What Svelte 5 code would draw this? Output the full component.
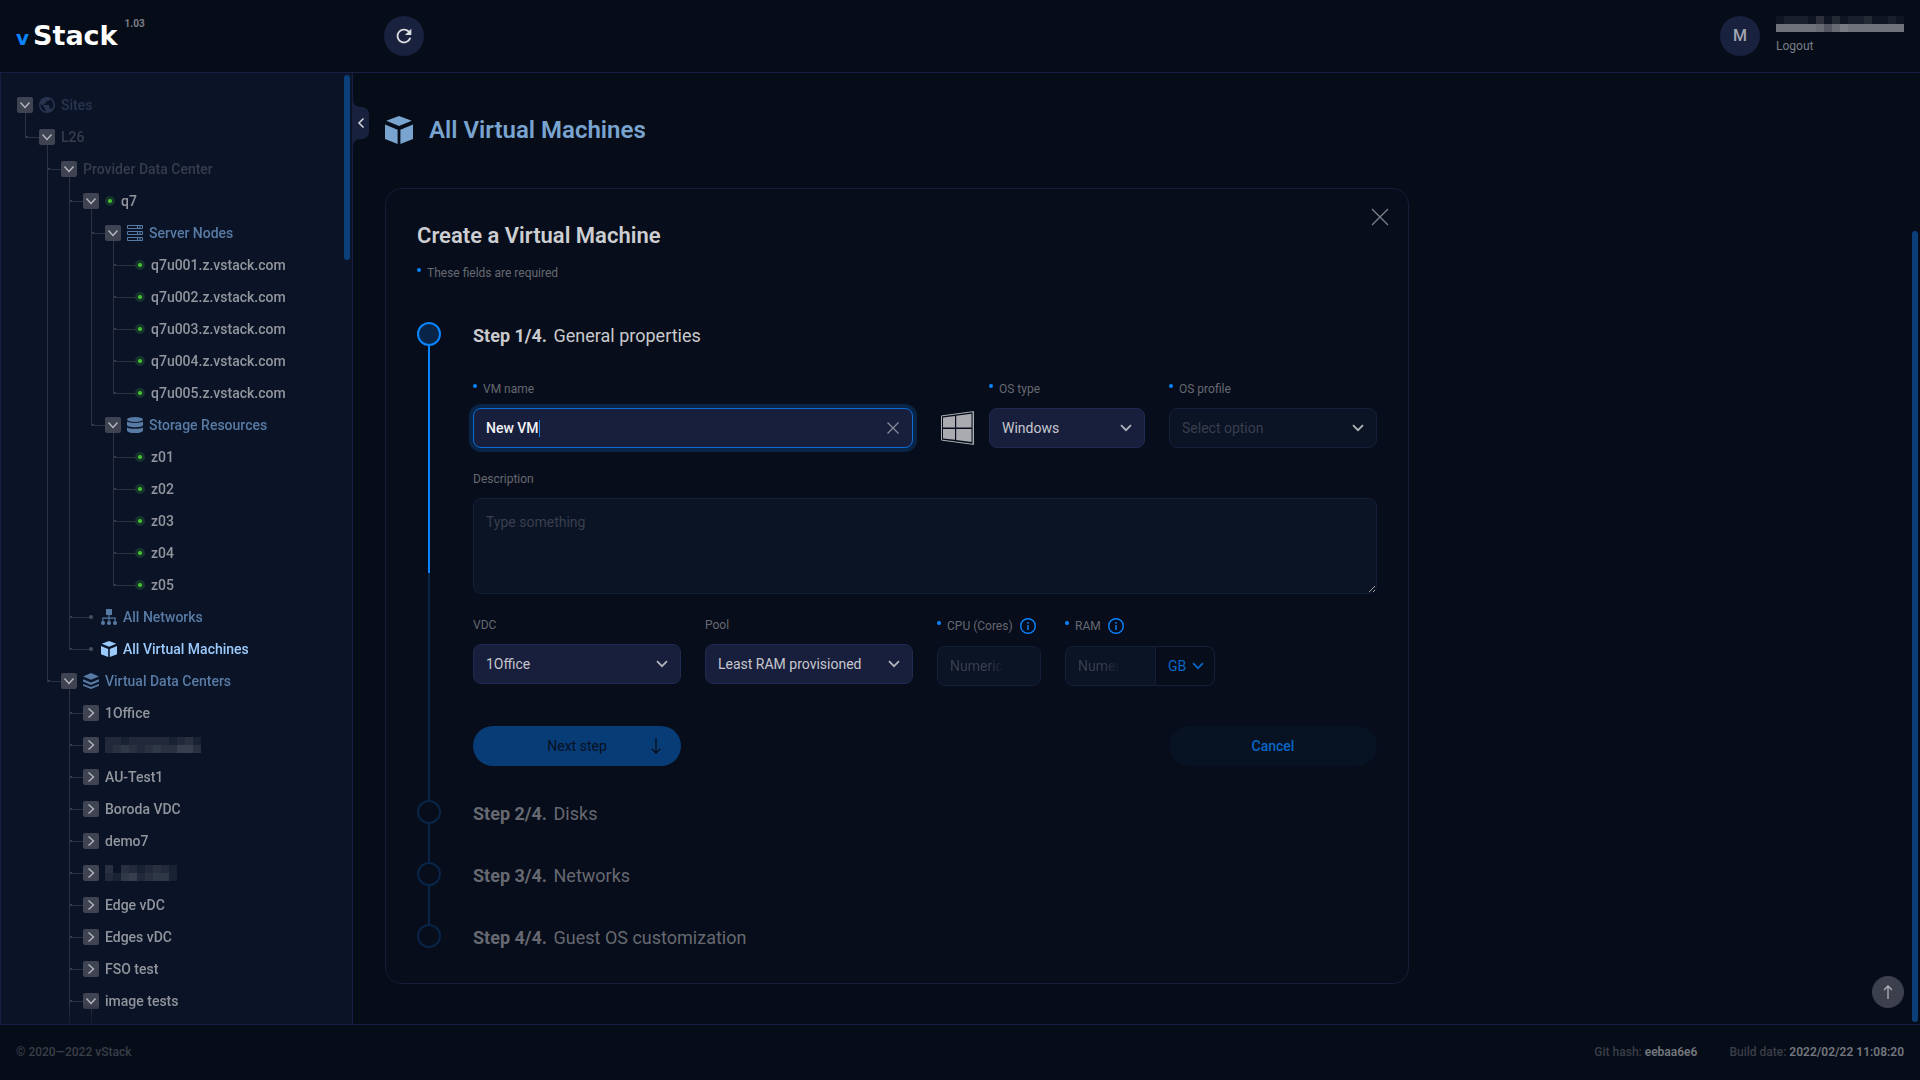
<script>
  const host = (n) => ({ label: n, kind: 'host' });

  const tree = [
    {
      label: 'Sites', icon: 'globe', tone: 'site', open: true,
      children: [{
        label: 'L26', tone: 'dim', open: true,
        children: [
          {
            label: 'Provider Data Center', tone: 'dim', open: true,
            children: [
              {
                label: 'q7', status: true, open: true,
                children: [
                  {
                    label: 'Server Nodes', icon: 'servers', tone: 'link', open: true,
                    children: [1, 2, 3, 4, 5].map((i) => host(`q7u00${i}.z.vstack.com`))
                  },
                  {
                    label: 'Storage Resources', icon: 'disks', tone: 'link', open: true,
                    children: [1, 2, 3, 4, 5].map((i) => host(`z0${i}`))
                  }
                ]
              },
              { label: 'All Networks', icon: 'network', tone: 'link', kind: 'leaf' },
              { label: 'All Virtual Machines', icon: 'cube', tone: 'active', kind: 'leaf' }
            ]
          },
          {
            label: 'Virtual Data Centers', icon: 'layers', tone: 'link', open: true,
            children: [
              { label: '1Office' },
              { mask: ['332333332342', '345434544664'] },
              { label: 'AU-Test1' },
              { label: 'Boroda VDC' },
              { label: 'demo7' },
              { mask: ['404323432', '325634552'] },
              { label: 'Edge vDC' },
              { label: 'Edges vDC' },
              { label: 'FSO test' },
              { label: 'image tests', open: true, children: [{ kind: 'pending' }] },
              { kind: 'pending' }
            ]
          }
        ]
      }]
    }
  ];

  const userMask = ['1222141312231121', 'bbbbba8acbbbbbbb'];
  const laterSteps = ['Disks', 'Networks', 'Guest OS customization'];

  let name = $state('New VM');
  const alpha = (c) => parseInt(c, 16) / 25;
</script>

{#snippet icon(id)}
  <svg class="icon" viewBox="0 0 16 16" aria-hidden="true">
    {#if id === 'globe'}
      <path transform="scale(.8) translate(-2 -2)" d="M12 2C6.48 2 2 6.48 2 12s4.48 10 10 10 10-4.48 10-10S17.52 2 12 2zm-1 17.93c-3.95-.49-7-3.85-7-7.93 0-.62.08-1.21.21-1.79L9 15v1c0 1.1.9 2 2 2v1.93zm6.9-2.54c-.26-.81-1-1.39-1.9-1.39h-1v-3c0-.55-.45-1-1-1H8v-2h2c.55 0 1-.45 1-1V7h2c1.1 0 2-.9 2-2v-.41c2.93 1.19 5 4.06 5 7.41 0 2.08-.8 3.97-2.1 5.39z" />
    {:else if id === 'servers'}
      {#each [0, 6, 12] as y}
        <path fill-rule="evenodd" d="M1 {y}h14a1 1 0 0 1 1 1v2a1 1 0 0 1-1 1H1a1 1 0 0 1-1-1v-2a1 1 0 0 1 1-1zM1 {y + 1}v2h9v-2zM11 {y + 1}v2h1.5v-2zM13.5 {y + 1}v2H15v-2z" />
      {/each}
    {:else if id === 'disks'}
      <ellipse cx="8" cy="2.5" rx="8" ry="2.5" />
      <path d="M0 4.6C2 6.5 14 6.5 16 4.6V8c0 3-16 3-16 0zM0 10.4c2 1.9 14 1.9 16 0v3c0 3.4-16 3.4-16 0z" />
    {:else if id === 'network'}
      <path d="M5 0h6v6H8.6v2.6h6.1v4h-1.1V9.7H8.6v2.9H7.4V9.7h-5v2.9H1.3v-4h6.1V6H5z" />
      <circle cx="2" cy="14" r="2" /><circle cx="8" cy="14" r="2" /><circle cx="14" cy="14" r="2" />
    {:else if id === 'layers'}
      <path d="M8 0l8 3.400L8 6.800 0 3.400zM0 6.300l8 3.200 8-3.200v2.300L8 12 0 8.600zM0 11l8 3.100L16 11v1.700L8 16l-8-3.300z" />
    {:else if id === 'cube'}
      <path d="M8 0l7.300 2.700L8 5.700.7 2.700zM0 4.900l7.200 3V16L0 13.200zM16 4.900l-7.200 3V16l7.200-2.800z" />
    {/if}
  </svg>
{/snippet}

{#snippet chevron()}
  <svg class="chevron" viewBox="0 0 12 8" aria-hidden="true"><path d="M1 1.200l5 5 5-5" /></svg>
{/snippet}

{#snippet pixels(rows)}
  <span class="pixels" aria-label="Hidden name" role="img">
    {#each rows as row}
      <span class="pixel-row">
        {#each row as c}<i style:opacity={alpha(c)}></i>{/each}
      </span>
    {/each}
  </span>
{/snippet}

{#snippet branch(nodes)}
  {#each nodes as n}
    <li class={n.kind ?? 'group'}>
      {#if n.kind !== 'pending'}
        <div class="row {n.tone ?? 'plain'}">
          {#if n.kind === 'leaf'}
            <span class="knot"></span>
          {:else if !n.kind}
            <button class="toggle" class:open={n.open} aria-label="Toggle {n.label ?? 'item'}" aria-expanded={!!n.open}>
              <svg viewBox="0 0 16 16" aria-hidden="true"><path d="M5.500 3.500L10.500 8l-5 4.500" /></svg>
            </button>
          {/if}
          {#if n.status || n.kind === 'host'}<span class="status"></span>{/if}
          {#if n.icon}{@render icon(n.icon)}{/if}
          {#if n.mask}{@render pixels(n.mask)}{:else}<a href="#{n.label}">{n.label}</a>{/if}
        </div>
      {/if}
      {#if n.children}
        <ul>{@render branch(n.children)}</ul>
      {/if}
    </li>
  {/each}
{/snippet}

<div class="app">
  <header>
    <div class="brand">
      <a class="logo" href="#home"><span class="v">v</span>Stack</a>
      <span class="version">1.03</span>
    </div>
    <button class="refresh" aria-label="Refresh">
      <svg viewBox="0 0 24 24" aria-hidden="true"><path d="M17.650 6.350C16.200 4.900 14.210 4 12 4c-4.420 0-7.990 3.580-7.990 8s3.570 8 7.990 8c3.730 0 6.840-2.550 7.730-6h-2.080c-.82 2.330-3.040 4-5.650 4-3.310 0-6-2.690-6-6s2.690-6 6-6c1.660 0 3.140.69 4.220 1.780L13 11h7V4l-2.350 2.350z" /></svg>
    </button>
    <div class="user">
      <span class="avatar">M</span>
      <div class="account">
        {@render pixels(userMask)}
        <a href="#logout">Logout</a>
      </div>
    </div>
  </header>

  <div class="body">
    <aside>
      <nav aria-label="Sites"><ul class="root">{@render branch(tree)}</ul></nav>
      <span class="thumb side"></span>
      <button class="collapse" aria-label="Collapse sidebar">
        <svg viewBox="0 0 16 48" aria-hidden="true">
          <path class="tab" d="M0 0C0 5 3 8 8 8h1a7 7 0 0 1 7 7v18a7 7 0 0 1-7 7H8c-5 0-8 3-8 8z" />
          <path class="arrow" d="M10.500 19.500L6 24l4.500 4.500" />
        </svg>
      </button>
    </aside>

    <main>
      <h1>{@render icon('cube')}All Virtual Machines</h1>

      <section class="card">
        <div class="card-head">
          <h2>Create a Virtual Machine</h2>
          <button class="close" aria-label="Close">
            <svg viewBox="0 0 18 18" aria-hidden="true"><path d="M1 1l16 16M17 1L1 17" /></svg>
          </button>
        </div>
        <p class="note"><i class="req"></i>These fields are required</p>

        <ol class="steps">
          <li class="step current">
            <div class="rail"><span class="bullet"></span><span class="line"></span></div>
            <div class="step-body">
              <h3><b>Step 1/4.</b> General properties</h3>
              <form>
                <div class="fields">
                  <div class="field wide">
                    <label for="vm-name"><i class="req"></i>VM name</label>
                    <div class="control">
                      <input id="vm-name" class="focused" type="text" bind:value={name} />
                      <button type="button" class="clear" aria-label="Clear name">
                        <svg viewBox="0 0 12 12" aria-hidden="true"><path d="M.5.500l11 11M11.500.500l-11 11" /></svg>
                      </button>
                    </div>
                  </div>
                  <div class="os">
                    <svg class="windows" viewBox="0 0 33 34" aria-hidden="true">
                      <path class="edge" d="M31 1l2-1v34l-2-1z" />
                      <path class="frame" d="M.5 4.900L32.500.6v32.800L.5 29.100z" />
                      <path d="M2 6.600l12-1.700v11.700H2zM15.200 4.700L30.500 2.700v13.900H15.200zM2 17.900h12v10.900L2 27.400zM15.200 17.900h15.300V31l-15.300-2z" />
                    </svg>
                    <div class="field">
                      <label for="os-type"><i class="req"></i>OS type</label>
                      <div class="control">
                        <select id="os-type"><option>Windows</option></select>
                        {@render chevron()}
                      </div>
                    </div>
                  </div>
                  <div class="field">
                    <label for="os-profile"><i class="req"></i>OS profile</label>
                    <div class="control">
                      <select id="os-profile" class="empty"><option>Select option</option></select>
                      {@render chevron()}
                    </div>
                  </div>
                </div>

                <div class="field">
                  <label for="description">Description</label>
                  <textarea id="description" placeholder="Type something"></textarea>
                </div>

                <div class="fields">
                  <div class="field">
                    <label for="vdc">VDC</label>
                    <div class="control">
                      <select id="vdc"><option>1Office</option></select>
                      {@render chevron()}
                    </div>
                  </div>
                  <div class="field">
                    <label for="pool">Pool</label>
                    <div class="control">
                      <select id="pool"><option>Least RAM provisioned</option></select>
                      {@render chevron()}
                    </div>
                  </div>
                  <div class="numbers">
                    <div class="field">
                      <label class="tall" for="cpu"><i class="req"></i>CPU (Cores)
                        <svg class="info" viewBox="0 0 16 16" aria-hidden="true"><circle cx="8" cy="8" r="7.300" /><path d="M8 4v1.800M8 7v5" /></svg>
                      </label>
                      <input id="cpu" class="number cpu" type="text" inputmode="numeric" placeholder="Numeric" />
                    </div>
                    <div class="field">
                      <label class="tall" for="ram"><i class="req"></i>RAM
                        <svg class="info" viewBox="0 0 16 16" aria-hidden="true"><circle cx="8" cy="8" r="7.300" /><path d="M8 4v1.800M8 7v5" /></svg>
                      </label>
                      <div class="joined">
                        <input id="ram" class="number ram" type="text" inputmode="numeric" placeholder="Numeric" />
                        <div class="control unit">
                          <select aria-label="RAM unit"><option>GB</option></select>
                          {@render chevron()}
                        </div>
                      </div>
                    </div>
                  </div>
                </div>

                <div class="actions">
                  <button type="button" class="next">
                    <span>Next step</span>
                    <svg viewBox="0 0 10 16" aria-hidden="true"><path d="M5 0v15M.7 10.700L5 15l4.300-4.300" /></svg>
                  </button>
                  <button type="button" class="cancel">Cancel</button>
                </div>
              </form>
            </div>
          </li>
          {#each laterSteps as title, i}
            <li class="step">
              <div class="rail"><span class="bullet"></span><span class="line"></span></div>
              <div class="step-body"><h3><b>Step {i + 2}/4.</b> {title}</h3></div>
            </li>
          {/each}
        </ol>
      </section>

      <span class="thumb page"></span>
      <button class="to-top" aria-label="Back to top">
        <svg viewBox="0 0 10 14" aria-hidden="true"><path d="M5 14V1M1 5l4-4 4 4" /></svg>
      </button>
    </main>
  </div>

  <footer>
    <span>© 2020—2022 vStack</span>
    <div class="build">
      <span>Git hash: <b>eebaa6e6</b></span>
      <span>Build date: <b>2022/02/22 11:08:20</b></span>
    </div>
  </footer>
</div>

<style>
  :global(body) {
    margin: 0;
    background: #060d18;
  }
  .app {
    --line: #172042;
    --blue: #0a84ff;
    --muted: #666971;
    --field: #0b1425;
    height: 100vh;
    display: grid;
    grid-template-rows: auto minmax(0, 1fr) auto;
    background: #060d18;
    color: #c9cacd;
    font: 400 14px/20px Roboto, 'Liberation Sans', sans-serif;
  }
  .app :global(*) {
    box-sizing: border-box;
  }
  button {
    padding: 0;
    border: 0;
    background: none;
    color: inherit;
    font: inherit;
    cursor: pointer;
  }
  a {
    color: inherit;
    text-decoration: none;
  }
  svg {
    display: block;
    fill: currentColor;
  }
  ul, ol {
    margin: 0;
    padding: 0;
    list-style: none;
  }
  h1, h2, h3, p {
    margin: 0;
  }

  /* Header */
  header {
    display: grid;
    grid-template-columns: 352px 1fr auto;
    align-items: center;
    padding: 16px;
    border-bottom: 1px solid var(--line);
  }
  .brand {
    display: flex;
    align-items: flex-start;
    gap: 7px;
    height: 40px;
  }
  .logo {
    color: #fff;
    font: 700 27px/40px 'DejaVu Sans', sans-serif;
  }
  .v {
    margin-right: 4px;
    color: var(--blue);
    font-size: 20px;
    line-height: 20px;
  }
  .version {
    color: #7b7e87;
    font-size: 10px;
    font-weight: 700;
    line-height: 16px;
  }
  .refresh, .avatar {
    width: 40px;
    height: 40px;
    display: grid;
    place-items: center;
    border-radius: 50%;
    background: #18223f;
  }
  .refresh {
    margin-left: 16px;
    color: #dcdde0;
  }
  .refresh svg {
    width: 22px;
    height: 22px;
  }
  .user {
    display: flex;
    gap: 16px;
  }
  .avatar {
    color: #a2a5b0;
    font-size: 16px;
    font-weight: 500;
  }
  .account {
    display: grid;
    gap: 5px;
    align-content: start;
    color: #7a7d85;
    font-size: 12px;
    line-height: 18px;
  }
  .pixels {
    display: block;
    color: #c4c6cf;
  }
  .account .pixels {
    color: #f4f4fa;
  }
  .pixel-row {
    display: flex;
  }
  .pixel-row i {
    width: 8px;
    height: 8px;
    background: currentColor;
  }

  /* Sidebar */
  .body {
    display: grid;
    grid-template-columns: 353px minmax(0, 1fr);
    min-height: 0;
  }
  aside {
    position: relative;
    min-height: 0;
    border: solid var(--line);
    border-width: 0 1px;
    background: #0b1426;
  }
  nav {
    height: 100%;
    overflow: hidden;
    padding: 16px;
    font-weight: 500;
    mask-image: linear-gradient(#000 calc(100% - 20px), rgba(0, 0, 0, 0.2));
  }
  nav ul {
    --wire: #2c3242;
  }
  nav ul ul {
    margin-top: -8px;
    padding-top: 8px;
    background: linear-gradient(var(--wire), var(--wire)) 8px 0 / 1px 8px no-repeat;
  }
  nav ul ul > li {
    padding-left: 22px;
    background:
      linear-gradient(var(--wire), var(--wire)) 8px 0 / 1px 100% no-repeat,
      linear-gradient(var(--wire), var(--wire)) 8px 16px / 14px 1px no-repeat,
      linear-gradient(#3a4050, #3a4050) 9px 15px / 2px 2px no-repeat;
  }
  nav ul ul > li:last-child {
    background-size: 1px 17px, 14px 1px, 2px 2px;
  }
  nav ul ul > li.host {
    padding-left: 30px;
  }
  nav ul ul > li.host, nav ul ul > li.leaf {
    background-size: 1px 100%, 22px 1px, 2px 2px;
  }
  nav ul ul > li.host:last-child, nav ul ul > li.leaf:last-child {
    background-size: 1px 17px, 22px 1px, 2px 2px;
  }
  nav ul ul > li.pending {
    height: 32px;
    background-size: 1px 100%, 0 0, 0 0;
  }
  .row {
    display: flex;
    align-items: center;
    gap: 6px;
    height: 32px;
  }
  .row a {
    white-space: nowrap;
  }
  .plain { color: #92959d; }
  .dim { color: #363c4b; }
  .site { color: #28354f; }
  .link { color: #587ba5; }
  .active { color: #9bcafd; }
  .icon {
    width: 16px;
    height: 16px;
  }
  .toggle {
    width: 16px;
    height: 16px;
    border-radius: 2px;
    background: #3f4352;
    color: #b9bbc2;
  }
  .toggle path, .close path, .clear path, .chevron path, .next path, .to-top path, .arrow {
    fill: none;
    stroke: currentColor;
    stroke-width: 1.3;
  }
  .toggle.open svg {
    transform: rotate(90deg);
  }
  .status {
    width: 10px;
    height: 10px;
    border-radius: 50%;
    border: 3px solid #16352c;
    background: #4cc534;
  }
  .knot {
    width: 4px;
    height: 4px;
    margin: 0 2px 0 6px;
    border-radius: 50%;
    background: #4a4f5d;
  }
  .thumb {
    position: absolute;
    width: 6px;
    border-radius: 3px;
    background: #0a3f7a;
  }
  .side {
    top: 2px;
    right: 2px;
    height: 185px;
  }
  .collapse {
    position: absolute;
    top: 26px;
    left: 100%;
    width: 17px;
    height: 48px;
    padding-left: 1px;
  }
  .tab {
    fill: #18223f;
  }
  .arrow {
    stroke: #d5d6da;
    stroke-width: 1.5;
  }

  /* Page */
  main {
    position: relative;
    min-height: 0;
    padding: 41px 32px 0;
  }
  h1 {
    display: flex;
    align-items: center;
    gap: 16px;
    margin-bottom: 42px;
    color: #7aa4d0;
    font-size: 24px;
    font-weight: 600;
    line-height: 32px;
  }
  h1 .icon {
    width: 28px;
    height: 28px;
  }
  .card {
    max-width: 1024px;
    padding: 33px 31px 31px;
    border: 1px solid #151d37;
    border-radius: 16px;
    background: #070d1a;
  }
  .card-head {
    display: flex;
    justify-content: space-between;
    align-items: flex-start;
    height: 28px;
  }
  h2 {
    color: #cdced1;
    font-size: 22px;
    font-weight: 600;
    line-height: 28px;
  }
  .close {
    margin: -14px -12px 0 0;
    color: #7d8089;
  }
  .close svg {
    width: 18px;
    height: 18px;
  }
  .note, label {
    display: flex;
    align-items: center;
    color: var(--muted);
    font-size: 12px;
    line-height: 18px;
  }
  .note {
    margin: 14px 0 40px;
  }
  .req {
    width: 4px;
    height: 4px;
    margin: 0 6px 6px 0;
    border-radius: 50%;
    background: var(--blue);
  }
  .step {
    display: grid;
    grid-template-columns: 24px minmax(0, 1fr);
    gap: 32px;
    color: var(--muted);
  }
  .rail {
    display: flex;
    flex-direction: column;
    align-items: center;
  }
  .bullet {
    width: 24px;
    height: 24px;
    border: 2px solid #082548;
    border-radius: 50%;
  }
  .line {
    width: 2px;
    flex: 1;
    background: #082548;
  }
  .current .bullet {
    border-color: var(--blue);
    background: #082548;
  }
  .current .line {
    background: linear-gradient(var(--blue) 50%, #082548 50%);
  }
  .step:last-child .line {
    display: none;
  }
  .step-body {
    padding-bottom: 34px;
  }
  .step:last-child .step-body {
    padding-bottom: 0;
  }
  h3 {
    font-size: 18px;
    font-weight: 400;
    line-height: 28px;
  }
  h3 b {
    margin-right: 2px;
    font-weight: 700;
  }
  .current h3 {
    color: #c9cacd;
  }

  /* Form */
  form {
    display: grid;
    gap: 22px;
    padding-top: 30px;
  }
  .fields {
    display: grid;
    grid-template-columns: repeat(4, minmax(0, 1fr));
    gap: 24px;
  }
  .wide {
    grid-column: span 2;
  }
  .field {
    display: grid;
    gap: 10px;
    align-content: start;
  }
  .os {
    display: grid;
    grid-template-columns: 48px 1fr;
    align-items: end;
    padding-left: 4px;
  }
  .windows {
    width: 33px;
    height: 34px;
    margin-bottom: 3px;
    color: #a9abb1;
  }
  .frame {
    fill: none;
    stroke: #a9abb1;
  }
  .edge {
    fill: #4c505b;
  }
  .tall {
    height: 20px;
  }
  .info {
    width: 16px;
    height: 16px;
    margin-left: 7px;
    fill: none;
    stroke: var(--blue);
    stroke-width: 1.4;
  }
  .control {
    display: grid;
    align-items: center;
  }
  .control > :global(*) {
    grid-area: 1 / 1;
  }
  input, select, textarea {
    width: 100%;
    height: 40px;
    margin: 0;
    padding: 0 12px;
    border: 1px solid #151e39;
    border-radius: 8px;
    outline: 0;
    background: var(--field);
    color: #c6c7cd;
    font: inherit;
    appearance: none;
  }
  select {
    border-color: #1f2951;
    background: #181f3d;
  }
  select.empty {
    border-color: #151e39;
    background: var(--field);
    color: #393f4d;
  }
  .focused {
    border-color: #0b6dd4;
    background: linear-gradient(var(--blue), var(--blue)) 65px 50% / 1px 17px no-repeat #181f3d;
    box-shadow: 0 0 0 4px #082548;
    color: #f2f2f4;
    font-weight: 500;
  }
  .clear {
    justify-self: end;
    margin-right: 14px;
    color: #858997;
  }
  .clear svg {
    width: 12px;
    height: 12px;
  }
  .chevron {
    width: 12px;
    height: 8px;
    justify-self: end;
    margin-right: 13px;
    color: #b4b6bc;
    pointer-events: none;
  }
  .chevron path {
    stroke-width: 1.7;
  }
  textarea {
    display: block;
    height: 96px;
    padding: 13px 12px;
    resize: vertical;
  }
  ::placeholder {
    color: #393f4d;
    opacity: 1;
  }
  .number::placeholder {
    background: linear-gradient(90deg, #393f4d 40px, transparent 54px);
    background-clip: text;
    color: transparent;
  }
  .ram::placeholder {
    background-image: linear-gradient(90deg, #393f4d 26px, transparent 42px);
  }
  .numbers {
    grid-column: span 2;
    display: grid;
    grid-template-columns: 104px 150px;
    gap: 24px;
  }
  .joined {
    display: grid;
    grid-template-columns: 91px 1fr;
  }
  .ram {
    border-radius: 8px 0 0 8px;
  }
  .unit select {
    border-color: #151e39;
    border-left: 0;
    border-radius: 0 8px 8px 0;
    background: transparent;
    color: #0a66c5;
  }
  .unit .chevron {
    margin-right: 11px;
    color: #0a66c5;
  }
  .actions {
    display: flex;
    justify-content: space-between;
    padding-top: 18px;
  }
  .next, .cancel {
    width: 208px;
    height: 40px;
    border-radius: 20px;
  }
  .next {
    display: grid;
    grid-template-columns: 1fr auto 1fr;
    align-items: center;
    background: #083c76;
    color: #06101f;
  }
  .next span {
    grid-column: 2;
  }
  .next svg {
    width: 10px;
    height: 16px;
    justify-self: end;
    margin-right: 20px;
  }
  .cancel {
    background: #071222;
    color: #0a66c5;
    font-weight: 500;
  }
  .page {
    top: 158px;
    right: 2px;
    bottom: 2px;
  }
  .to-top {
    position: absolute;
    right: 16px;
    bottom: 16px;
    width: 32px;
    height: 32px;
    display: grid;
    place-items: center;
    border-radius: 50%;
    background: #3c404c;
    color: #b0b2b8;
  }
  .to-top svg {
    width: 10px;
    height: 14px;
  }

  /* Footer */
  footer {
    display: flex;
    align-items: center;
    justify-content: space-between;
    height: 56px;
    padding: 0 16px 2px;
    border-top: 1px solid var(--line);
    color: #3a3e48;
    font-size: 12px;
    font-weight: 500;
  }
  .build {
    display: flex;
    gap: 32px;
  }
  footer b {
    color: #74777f;
    font-weight: 600;
  }
</style>
